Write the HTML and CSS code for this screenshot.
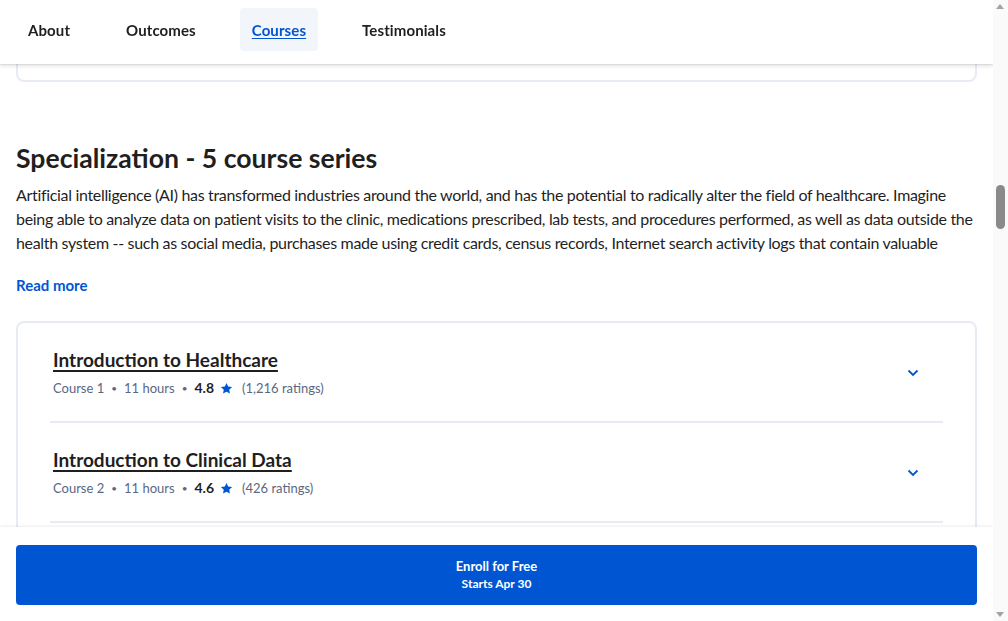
FILE: index.html
```html
<!DOCTYPE html>
<html lang="en">
<head>
<meta charset="utf-8">
<title>Specialization</title>
<link rel="stylesheet" href="styles.css">
</head>
<body>
<nav class="topnav">
  <a class="nav-item" href="#">About</a>
  <a class="nav-item" href="#">Outcomes</a>
  <a class="nav-item active" href="#">Courses</a>
  <a class="nav-item" href="#">Testimonials</a>
</nav>

<main class="page">
  <div class="prev-card"></div>

  <section class="series">
    <h2 class="series-title">Specialization - 5 course series</h2>
    <p class="series-desc">Artificial intelligence (AI) has transformed industries around the world, and has the potential to radically alter the field of healthcare. Imagine being able to analyze data on patient visits to the clinic, medications prescribed, lab tests, and procedures performed, as well as data outside the health system -- such as social media, purchases made using credit cards, census records, Internet search activity logs that contain valuable</p>
    <a class="read-more" href="#">Read more</a>

    <div class="course-card">
      <div class="course-row">
        <div class="course-info">
          <a class="course-title" href="#">Introduction to Healthcare</a>
          <div class="course-meta">
            <span>Course 1</span><span class="dot">•</span><span>11 hours</span><span class="dot">•</span><span class="rating">4.8</span>
            <svg class="star" viewBox="0 0 24 24" width="13" height="13"><path d="M12 1.8l3.1 6.6 7.2.9-5.3 5 1.4 7.1L12 17.9l-6.4 3.5 1.4-7.1-5.3-5 7.2-.9z" fill="#0056d2"/></svg>
            <span class="count">(1,216 ratings)</span>
          </div>
        </div>
        <svg class="chev" viewBox="0 0 12 8" width="12" height="8"><path d="M1.5 1.5L6 6l4.5-4.5" fill="none" stroke="#0056d2" stroke-width="1.8"/></svg>
      </div>
      <div class="course-row">
        <div class="course-info">
          <a class="course-title" href="#">Introduction to Clinical Data</a>
          <div class="course-meta">
            <span>Course 2</span><span class="dot">•</span><span>11 hours</span><span class="dot">•</span><span class="rating">4.6</span>
            <svg class="star" viewBox="0 0 24 24" width="13" height="13"><path d="M12 1.8l3.1 6.6 7.2.9-5.3 5 1.4 7.1L12 17.9l-6.4 3.5 1.4-7.1-5.3-5 7.2-.9z" fill="#0056d2"/></svg>
            <span class="count">(426 ratings)</span>
          </div>
        </div>
        <svg class="chev" viewBox="0 0 12 8" width="12" height="8"><path d="M1.5 1.5L6 6l4.5-4.5" fill="none" stroke="#0056d2" stroke-width="1.8"/></svg>
      </div>
    </div>
  </section>
</main>

<div class="enroll-bar">
  <button class="enroll-btn">
    <span class="enroll-main">Enroll for Free</span>
    <span class="enroll-sub">Starts Apr 30</span>
  </button>
</div>

<div class="scrollbar">
  <span class="arrow up"></span>
  <span class="thumb"></span>
  <span class="arrow down"></span>
</div>
</body>
</html>
```

FILE: styles.css
```css
* { box-sizing: border-box; }
html, body { margin: 0; padding: 0; height: 100%; overflow: hidden; }
body {
  font-family: "Lato", "Open Sans", "Liberation Sans", sans-serif;
  color: #1f1f1f;
  background: #fff;
  width: 993px;
}

.topnav {
  position: fixed;
  top: 0; left: 0;
  width: 993px;
  height: 64px;
  background: #fff;
  display: flex;
  align-items: center;
  gap: 32px;
  padding: 0 16px;
  box-shadow: 0 2px 4px rgba(0,0,0,0.12), 0 1px 1px rgba(0,0,0,0.06);
  z-index: 5;
}
.nav-item {
  display: flex;
  align-items: center;
  height: 43px;
  margin-top: -5px;
  padding: 0 12px;
  border-radius: 4px;
  font-size: 15px;
  font-weight: 700;
  letter-spacing: 0.1px;
  color: #1f1f1f;
  text-decoration: none;
}
.nav-item.active {
  background: #f2f5fa;
  color: #0056d2;
  text-decoration: underline;
  text-underline-offset: 2px;
}

.page { padding: 0 16px; }
.prev-card {
  height: 62px;
  margin-top: 20px;
  border: 2px solid #e6ebf4;
  border-radius: 8px;
}

.series { padding-top: 60px; }
.series-title {
  margin: 0;
  font-size: 26.6px;
  line-height: 32px;
  font-weight: 700;
}
.series-desc {
  margin: 9px 0 0;
  font-size: 16px;
  line-height: 24px;
  letter-spacing: -0.32px;
}
.read-more {
  display: block;
  margin-top: 20px;
  font-size: 15px;
  line-height: 20px;
  font-weight: 700;
  color: #0056d2;
  text-decoration: none;
}

.course-card {
  margin-top: 26px;
  border: 2px solid #e6ebf4;
  border-radius: 8px;
  padding: 0 32px 40px;
}
.course-row {
  display: flex;
  align-items: center;
  justify-content: space-between;
  padding: 23px 24px 23px 3px;
  border-bottom: 2px solid #e6ebf4;
}
.course-info { display: flex; flex-direction: column; gap: 4px; }
.course-title {
  font-size: 19px;
  line-height: 28px;
  font-weight: 700;
  color: #1f1f1f;
  text-decoration: underline;
  text-underline-offset: 3px;
  text-decoration-thickness: 2px;
}
.course-meta {
  display: flex;
  align-items: center;
  font-size: 13px;
  line-height: 20px;
  color: #5b6780;
}
.dot { margin: 0 7px; font-size: 10px; }
.rating { font-weight: 700; font-size: 14px; color: #1f1f1f; }
.star { margin: 0 9px 0 6px; }
.chev { margin-top: 2px; }

.enroll-bar {
  position: fixed;
  left: 0; bottom: 0;
  width: 993px;
  height: 94px;
  background: #fff;
  padding: 18px 16px 16px;
  box-shadow: 0 -1px 3px rgba(0,0,0,0.08);
  z-index: 5;
}
.enroll-btn {
  width: 100%;
  height: 60px;
  border: 0;
  border-radius: 4px;
  background: #0056d2;
  color: #fff;
  font-family: inherit;
  display: flex;
  flex-direction: column;
  align-items: center;
  justify-content: center;
  gap: 1px;
  padding: 0 0 2px;
}
.enroll-main { font-size: 13px; font-weight: 700; line-height: 18px; }
.enroll-sub { font-size: 12px; font-weight: 700; line-height: 16px; }

.scrollbar {
  position: fixed;
  top: 0; right: 0;
  width: 15px;
  height: 100%;
  background: #fafafa;
  z-index: 10;
}
.arrow {
  position: absolute;
  left: 3px;
  width: 0; height: 0;
  border-left: 4.5px solid transparent;
  border-right: 4.5px solid transparent;
}
.arrow.up { top: 4px; border-bottom: 5px solid #a3a3a3; }
.arrow.down { bottom: 4px; border-top: 5px solid #a3a3a3; }
.thumb {
  position: absolute;
  left: 3px;
  top: 185px;
  width: 9px;
  height: 44px;
  border-radius: 5px;
  background: #8a8a8a;
}
```
